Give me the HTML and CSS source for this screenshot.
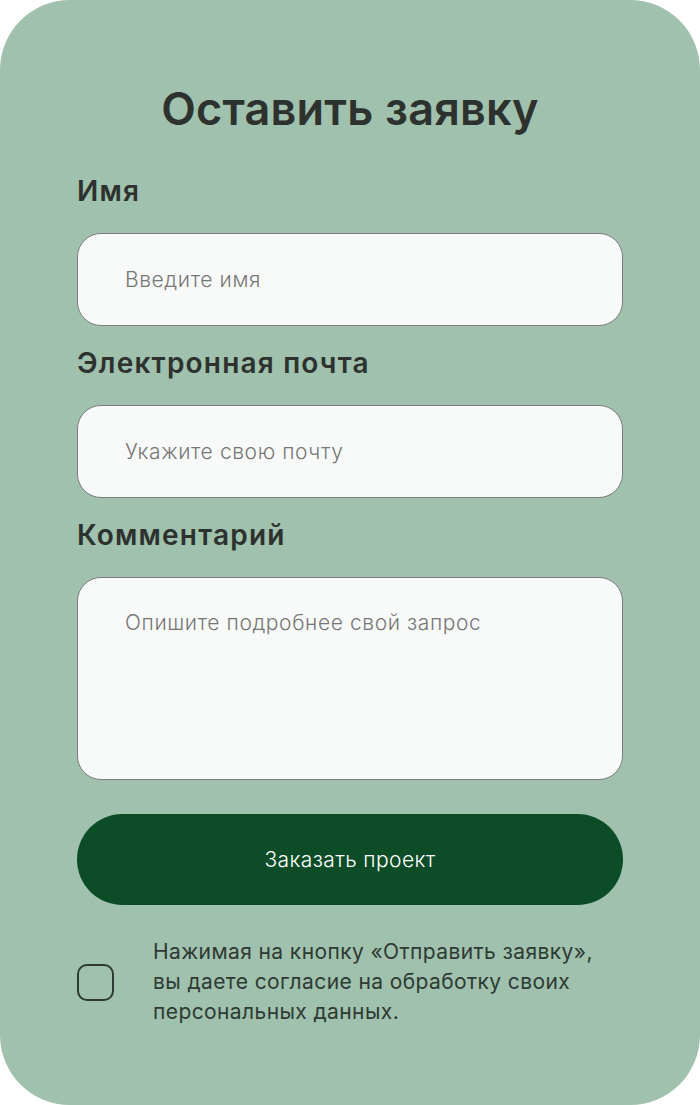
FILE: index.html
```html
<!DOCTYPE html>
<html lang="ru">
<head>
  <meta charset="UTF-8" />
  <meta name="viewport" content="width=device-width, initial-scale=1.0"/>
  <title>Оставить заявку</title>
  <link rel="stylesheet" href="styles.css">
</head>
<body>

  <section class="request-card">
    <h1>Оставить заявку</h1>

    <form class="request-form" onsubmit="return false;">
      <label class="field-label" for="name">Имя</label>
      <input class="field" id="name" type="text" placeholder="Введите имя">

      <label class="field-label" for="email">Электронная почта</label>
      <input class="field" id="email" type="email" placeholder="Укажите свою почту">

      <label class="field-label" for="comment">Комментарий</label>
      <textarea class="field field-area" id="comment" placeholder="Опишите подробнее свой запрос"></textarea>

      <button class="submit-btn" type="submit">Заказать проект</button>

      <label class="consent">
        <input type="checkbox" class="consent-check">
        <span class="consent-text">Нажимая на кнопку «Отправить заявку», вы даете согласие на обработку своих персональных данных.</span>
      </label>
    </form>
  </section>

</body>
</html>
```

FILE: styles.css
```css
* {
  margin: 0;
  padding: 0;
  box-sizing: border-box;
  font-family: 'Inter', 'Noto Sans', sans-serif;
}

body {
  background-color: #fff;
  color: #2e322f;
}

.request-card {
  min-height: 1105px;
  background-color: #9fc1ad;
  border-radius: 70px;
  padding: 82px 77px 60px;
}

.request-card h1 {
  text-align: center;
  font-size: 45px;
  font-weight: 600;
  line-height: 54px;
  letter-spacing: 0.2px;
  margin-bottom: 38px;
}

.request-form {
  display: flex;
  flex-direction: column;
}

.field-label {
  font-size: 28px;
  font-weight: 600;
  line-height: 34px;
  letter-spacing: 1.2px;
  margin-bottom: 25px;
}

.field {
  height: 93px;
  padding: 0 47px;
  margin-bottom: 20px;
  background-color: #f8faf9;
  border: 1.5px solid #7b7d7c;
  border-radius: 24px;
  font-size: 21px;
  font-weight: 300;
  letter-spacing: 0.6px;
  color: #333;
  outline: none;
}

.field::placeholder {
  color: #777;
}

.field-area {
  height: 203px;
  padding: 31px 47px;
  resize: none;
  line-height: 28px;
  margin-bottom: 34px;
}

.submit-btn {
  height: 91px;
  background-color: #0c4d28;
  color: #fff;
  border: none;
  border-radius: 46px;
  font-size: 21px;
  font-weight: 300;
  letter-spacing: 0.4px;
  cursor: pointer;
}

.consent {
  display: flex;
  align-items: center;
  gap: 39px;
  margin-top: 32px;
}

.consent-check {
  appearance: none;
  flex-shrink: 0;
  width: 37px;
  height: 37px;
  border: 2px solid #2e3a33;
  border-radius: 10px;
  background: transparent;
}

.consent-text {
  font-size: 21px;
  line-height: 30px;
  letter-spacing: 0.4px;
  color: #2e3a33;
  max-width: 450px;
}
```
